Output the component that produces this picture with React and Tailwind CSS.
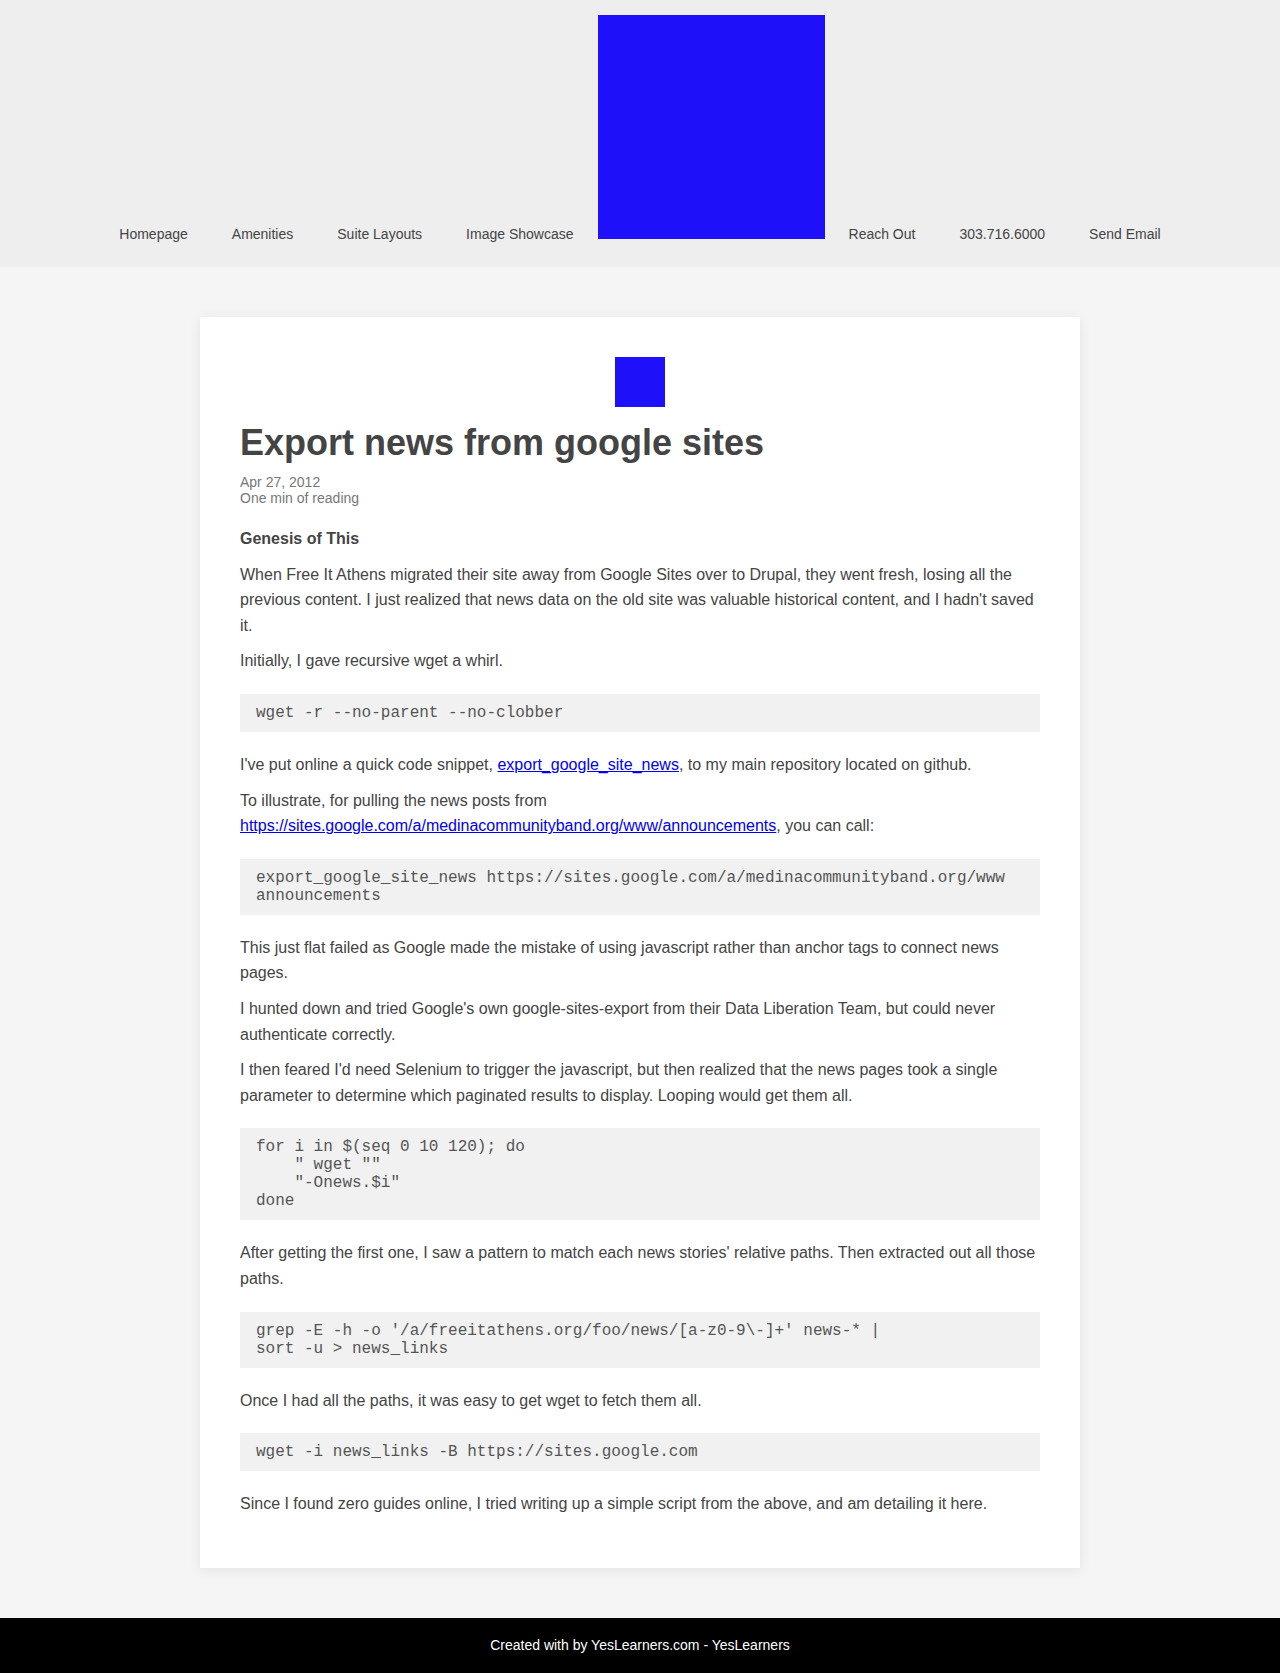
const navLeft = ['Homepage', 'Amenities', 'Suite Layouts', 'Image Showcase'];
const navRight = ['Reach Out', '303.716.6000', 'Send Email'];

function Code({ children }) {
  return (
    <pre className="my-[20px] bg-[#f1f1f1] px-4 py-[10px] text-[16px] leading-[18px] text-[#555] font-['Liberation_Mono',monospace] whitespace-pre-wrap">
      {children}
    </pre>
  );
}

function P({ children }) {
  return <p className="mb-[10px] text-[16px] leading-[1.6] text-[#444]">{children}</p>;
}

export default function App() {
  return (
    <div className="min-h-screen bg-[#f5f5f5] font-['Liberation_Sans',Arial,sans-serif]">
      <header className="h-[267px] bg-[#eeeeee] pt-[15px]">
        <nav className="flex items-baseline justify-center text-[14px] text-[#444]">
          {navLeft.map((n) => (
            <a key={n} href="#" className="px-[22px]">
              {n}
            </a>
          ))}
          <div className="mx-[2px] h-[224px] w-[227px] bg-[#1e10f8]" />
          {navRight.map((n) => (
            <a key={n} href="#" className="px-[22px]">
              {n}
            </a>
          ))}
        </nav>
      </header>

      <main className="py-[50px]">
        <article className="mx-auto w-[880px] bg-white px-10 pt-10 pb-[41px] shadow-[0_2px_12px_rgba(0,0,0,0.08)]">
          <div className="mx-auto h-[50px] w-[50px] bg-[#1e10f8]" />
          <h1 className="mt-[14px] mb-[10px] text-[36px] leading-[43px] font-bold text-[#444]">
            Export news from google sites
          </h1>
          <div className="mb-[20px] text-[14px] leading-[16px] text-[#777]">
            <div>Apr 27, 2012</div>
            <div>One min of reading</div>
          </div>

          <P>
            <strong>Genesis of This</strong>
          </P>
          <P>
            When Free It Athens migrated their site away from Google Sites over to Drupal, they went fresh, losing
            all the previous content. I just realized that news data on the old site was valuable historical
            content, and I hadn't saved it.
          </P>
          <P>Initially, I gave recursive wget a whirl.</P>
          <Code>wget -r --no-parent --no-clobber</Code>
          <P>
            I've put online a quick code snippet,{' '}
            <a href="#" className="text-[#0000ee] underline">
              export_google_site_news
            </a>
            , to my main repository located on github.
          </P>
          <P>
            To illustrate, for pulling the news posts from{' '}
            <a href="#" className="text-[#0000ee] underline">
              https://sites.google.com/a/medinacommunityband.org/www/announcements
            </a>
            , you can call:
          </P>
          <Code>{`export_google_site_news https://sites.google.com/a/medinacommunityband.org/www
announcements`}</Code>
          <P>
            This just flat failed as Google made the mistake of using javascript rather than anchor tags to connect
            news pages.
          </P>
          <P>
            I hunted down and tried Google's own google-sites-export from their Data Liberation Team, but could
            never authenticate correctly.
          </P>
          <P>
            I then feared I'd need Selenium to trigger the javascript, but then realized that the news pages took a
            single parameter to determine which paginated results to display. Looping would get them all.
          </P>
          <Code>{`for i in $(seq 0 10 120); do
    " wget ""
    "-Onews.$i"
done`}</Code>
          <P>
            After getting the first one, I saw a pattern to match each news stories' relative paths. Then extracted
            out all those paths.
          </P>
          <Code>{`grep -E -h -o '/a/freeitathens.org/foo/news/[a-z0-9\\-]+' news-* |
sort -u > news_links`}</Code>
          <P>Once I had all the paths, it was easy to get wget to fetch them all.</P>
          <Code>wget -i news_links -B https://sites.google.com</Code>
          <P>
            Since I found zero guides online, I tried writing up a simple script from the above, and am detailing it
            here.
          </P>
        </article>
      </main>

      <footer className="flex h-[56px] items-center justify-center bg-black text-[14px] text-white">
        Created with by YesLearners.com - YesLearners
      </footer>
    </div>
  );
}
